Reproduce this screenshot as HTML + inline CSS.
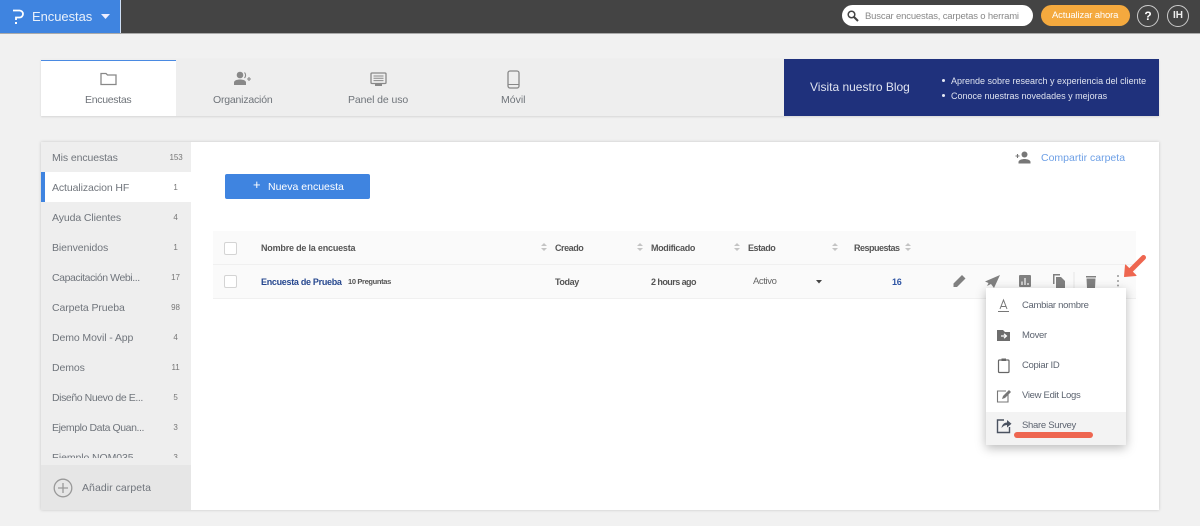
<!DOCTYPE html>
<html lang="es"><head><meta charset="utf-8"><title>Encuestas</title>
<style>
html,body{margin:0;padding:0;width:1200px;height:526px;overflow:hidden;background:#f1f1f1}
body{position:relative;font-family:"Liberation Sans",sans-serif;color:#666}
div,span,svg{position:absolute}
.t{white-space:nowrap;line-height:16px;font-size:11px;color:#6b7078}
.s{font-size:10.5px;color:#70757c;left:52px;letter-spacing:-.1px}
.c{letter-spacing:-.42px}
.n{font-size:8px;color:#777;width:12px;text-align:center;left:169.500px;letter-spacing:-.1px}
.m{left:1022px;font-size:9.500px;color:#5d6470;letter-spacing:-.3px}
.h{font-size:9px;font-weight:bold;color:#555;letter-spacing:-.45px}
.o{font-size:10.500px;color:#6f747a;letter-spacing:-.2px}
</style></head><body>
<!-- Top bar -->
<div style="left:0;top:0;width:1200px;height:33px;background:#444;border-bottom:1px solid #aaa"></div>
<div style="left:0;top:0;width:120px;height:33px;background:#3f84e0;border-right:1px solid #cfdff5"></div>
<svg style="left:11px;top:8px" width="14" height="17" viewBox="0 0 14 17"><path d="M2 2.500H8.500A3.500 3.500 0 0 1 8.500 9.500H5V12" fill="none" stroke="#fff" stroke-width="1.800"/><rect x="4" y="14" width="2" height="2" fill="#fff"/></svg>
<span class="t" style="left:32px;top:9px;font-size:13px;color:#e8f0fb;letter-spacing:-.05px">Encuestas</span>
<svg style="left:101px;top:14px" width="9" height="6"><path d="M0 0H9L4.500 5Z" fill="#eef"/></svg>

<div style="left:842px;top:5px;width:191px;height:21px;background:#fff;border-radius:11px"></div>
<svg style="left:847px;top:10px" width="12" height="12" viewBox="0 0 12 12"><circle cx="4.500" cy="4.500" r="3.300" fill="none" stroke="#444" stroke-width="1.500"/><path d="M7 7L11 11" stroke="#444" stroke-width="2"/></svg>
<span class="t" style="left:865px;top:9px;font-size:9.500px;color:#888;letter-spacing:-.17px">Buscar encuestas, carpetas o herrami</span>
<div style="left:1041px;top:5px;width:89px;height:21px;background:#f4a93e;border-radius:11px"></div>
<span class="t" style="left:1052px;top:8px;font-size:9.500px;color:#fff;letter-spacing:-.15px">Actualizar ahora</span>
<div style="left:1137px;top:5px;width:20px;height:20px;border:1px solid #ccc;border-radius:50%"></div>
<span class="t" style="left:1137px;top:8px;width:22px;text-align:center;font-size:12px;font-weight:bold;color:#fff">?</span>
<div style="left:1167px;top:5px;width:20px;height:20px;border:1px solid #ccc;border-radius:50%"></div>
<span class="t" style="left:1167px;top:8px;width:22px;text-align:center;font-size:10px;font-weight:bold;color:#eee">IH</span>

<!-- Tabs -->
<div style="left:41px;top:59px;width:1118px;height:57px;background:#eee;box-shadow:0 1px 2px rgba(0,0,0,.12)"></div>
<div style="left:41px;top:60px;width:135px;height:56px;background:#fff;border-top:1px solid #4a8ae2;box-sizing:border-box"></div>
<svg style="left:100px;top:72px" width="17" height="14" viewBox="0 0 17 14"><path d="M1 12.500V1.500H6L7.500 3H16V12.500Z" fill="none" stroke="#888" stroke-width="1.300"/></svg>
<span class="t o" style="left:85px;top:92px;letter-spacing:-.3px">Encuestas</span>
<svg style="left:233px;top:71px" width="20" height="15" viewBox="0 0 20 15"><circle cx="7" cy="4" r="3.300" fill="#888"/><path d="M1 14V11.500C1 9.500 4 8.500 7 8.500S13 9.500 13 11.500V14Z" fill="#888"/><path d="M11.500 1.500A4 4 0 0 1 11.500 7M16 6V10M14 8H18" fill="none" stroke="#888" stroke-width="1.100"/></svg>
<span class="t o" style="left:213px;top:92px">Organización</span>
<svg style="left:370px;top:72px" width="17" height="15" viewBox="0 0 17 15"><rect x="1" y="1" width="15" height="10.500" rx="1" fill="none" stroke="#888" stroke-width="1.300"/><path d="M3.500 4H13.500M3.500 6.300H13.500M3.500 8.600H13.500" stroke="#888"/><rect x="5" y="12" width="7" height="2" fill="#888"/></svg>
<span class="t o" style="left:348px;top:92px;letter-spacing:-.1px">Panel de uso</span>
<svg style="left:507px;top:70px" width="13" height="19" viewBox="0 0 13 19"><rect x="1" y="1" width="11" height="17" rx="2" fill="none" stroke="#888" stroke-width="1.300"/><path d="M1 14.500H12" stroke="#888"/></svg>
<span class="t o" style="left:501px;top:92px;letter-spacing:0">Móvil</span>

<div style="left:784px;top:59px;width:375px;height:57px;background:#1f317c"></div>
<span class="t" style="left:810px;top:79px;font-size:12px;color:#dfe3f0">Visita nuestro Blog</span>
<div style="left:942px;top:79px;width:3px;height:3px;border-radius:50%;background:#e6e9f4"></div>
<div style="left:942px;top:94px;width:3px;height:3px;border-radius:50%;background:#e6e9f4"></div>
<span class="t" style="left:951px;top:73px;font-size:9px;color:#dfe3f0">Aprende sobre research y experiencia del cliente</span>
<span class="t" style="left:951px;top:88px;font-size:9px;color:#dfe3f0">Conoce nuestras novedades y mejoras</span>

<!-- Main card -->
<div style="left:41px;top:142px;width:1118px;height:368px;background:#fff;box-shadow:0 0 3px rgba(0,0,0,.18)"></div>
<div style="left:41px;top:142px;width:150px;height:368px;background:#eee;overflow:hidden"></div>
<div style="left:41px;top:172px;width:150px;height:30px;background:#fff"></div>
<div style="left:41px;top:172px;width:4px;height:30px;background:#3f84e0"></div>
<span class="t s" style="top:150px">Mis encuestas</span><span class="t n" style="top:150px">153</span>
<span class="t s" style="top:180px">Actualizacion HF</span><span class="t n" style="top:180px">1</span>
<span class="t s" style="top:210px">Ayuda Clientes</span><span class="t n" style="top:210px">4</span>
<span class="t s" style="top:240px">Bienvenidos</span><span class="t n" style="top:240px">1</span>
<span class="t s c" style="top:270px">Capacitación Webi...</span><span class="t n" style="top:270px">17</span>
<span class="t s" style="top:300px">Carpeta Prueba</span><span class="t n" style="top:300px">98</span>
<span class="t s" style="top:330px">Demo Movil - App</span><span class="t n" style="top:330px">4</span>
<span class="t s" style="top:360px">Demos</span><span class="t n" style="top:360px">11</span>
<span class="t s c" style="top:390px">Diseño Nuevo de E...</span><span class="t n" style="top:390px">5</span>
<span class="t s c" style="top:420px">Ejemplo Data Quan...</span><span class="t n" style="top:420px">3</span>
<span class="t s" style="top:450px">Ejemplo NOM035</span><span class="t n" style="top:450px">3</span>
<div style="left:41px;top:458px;width:150px;height:7px;background:#eee"></div>
<div style="left:41px;top:465px;width:150px;height:45px;background:#e6e6e6"></div>
<svg style="left:53px;top:478px" width="20" height="20" viewBox="0 0 20 20"><circle cx="10" cy="10" r="8.800" fill="none" stroke="#999" stroke-width="1.300"/><path d="M10 5V15M5 10H15" stroke="#999" stroke-width="1.300"/></svg>
<span class="t" style="left:82px;top:480px;font-size:10.500px;color:#70757c;letter-spacing:.05px">Añadir carpeta</span>

<!-- Share -->
<svg style="left:1015px;top:151px" width="16" height="13" viewBox="0 0 16 13"><circle cx="9.500" cy="3.500" r="3" fill="#777"/><path d="M3.500 12.500V11C3.500 9 7 8 9.500 8S15.500 9 15.500 11V12.500Z" fill="#777"/><path d="M2.500 3V7M.5 5H4.500" stroke="#777" stroke-width="1.100"/></svg>
<span class="t" style="left:1041px;top:150px;font-size:10.500px;color:#6ea0e6">Compartir carpeta</span>

<!-- Button -->
<div style="left:225px;top:174px;width:145px;height:25px;background:#3f84e0;border-radius:2px"></div>
<span class="t" style="left:253px;top:177px;font-size:13px;color:#fff">+</span>
<span class="t" style="left:268px;top:179px;font-size:10.500px;color:#fff">Nueva encuesta</span>

<!-- Table -->
<div style="left:213px;top:231px;width:923px;height:34px;background:#fafafa;border-bottom:1px solid #f0f0f0;box-sizing:border-box"></div>
<div style="left:213px;top:265px;width:923px;height:34px;background:#fafafa;border-bottom:1px solid #f0f0f0;box-sizing:border-box"></div>
<div style="left:224px;top:242px;width:11px;height:11px;border:1px solid #d4d4d4;border-radius:2px;background:#fff"></div>
<div style="left:224px;top:275px;width:11px;height:11px;border:1px solid #d4d4d4;border-radius:2px;background:#fff"></div>
<span class="t h" style="left:261px;top:240px;letter-spacing:-.2px">Nombre de la encuesta</span>
<span class="t h" style="left:555px;top:240px">Creado</span>
<span class="t h" style="left:651px;top:240px;letter-spacing:-.35px">Modificado</span>
<span class="t h" style="left:748px;top:240px">Estado</span>
<span class="t h" style="left:854px;top:240px;letter-spacing:-.5px">Respuestas</span>
<svg style="left:0;top:0" width="1200" height="526">
<g fill="#c4c4c4"><path d="M541 246L544 243L547 246ZM541 248H547L544 251Z"/><path d="M637 246L640 243L643 246ZM637 248H643L640 251Z"/><path d="M734 246L737 243L740 246ZM734 248H740L737 251Z"/><path d="M832 246L835 243L838 246ZM832 248H838L835 251Z"/><path d="M905 246L908 243L911 246ZM905 248H911L908 251Z"/></g>
</svg>
<span class="t" style="left:261px;top:274px;font-size:9px;font-weight:bold;color:#27488f;letter-spacing:-.3px">Encuesta de Prueba</span>
<span class="t" style="left:348px;top:274px;font-size:7.500px;color:#555;font-weight:bold;letter-spacing:-.35px">10 Preguntas</span>
<span class="t h" style="left:555px;top:274px;letter-spacing:-.4px">Today</span>
<span class="t h" style="left:651px;top:274px;letter-spacing:-.55px">2 hours ago</span>
<span class="t" style="left:753px;top:274px;font-size:9.500px;color:#666;letter-spacing:-.4px">Activo</span>
<svg style="left:816px;top:280px" width="6" height="4"><path d="M0 0H6L3 3.500Z" fill="#444"/></svg>
<span class="t" style="left:892px;top:274px;font-size:9px;font-weight:bold;color:#2f55a4;letter-spacing:-.3px">16</span>

<!-- Action icons -->
<svg style="left:0;top:0" width="1200" height="526">
<path d="M953.500 287V283.500L962 275L965.500 278.500L957 287Z" fill="#808080"/>
<path d="M985 281.500L1000 275L994 288L991 284L987 286L988.500 283Z" fill="#808080"/>
<rect x="1019" y="275" width="12" height="12" rx="1" fill="#808080"/><path d="M1022 281.500V285M1025 278V285M1028 283V285" stroke="#fafafa" stroke-width="1.200"/>
<path d="M1053 274H1060V275.500H1054.500V284H1053Z" fill="#808080"/><path d="M1056 277H1061L1065 281V288H1056Z" fill="#808080"/>
<path d="M1074 272V290" stroke="#e6e6e6"/>
<path d="M1086.500 278.500H1095.500L1095 288H1087Z" fill="#808080"/><path d="M1086 276H1096V277.500H1086Z" fill="#808080"/>
<g fill="#999"><circle cx="1118" cy="276" r="1"/><circle cx="1118" cy="281" r="1"/><circle cx="1118" cy="285.500" r="1"/></g>
<path d="M1143.500 257.500L1131 270" stroke="#ee6650" stroke-width="5" stroke-linecap="round"/>
<path d="M1124.500 276.500L1125.500 265L1136 275.500Z" fill="#ee6650" stroke="#ee6650" stroke-linejoin="round"/>
</svg>

<!-- Menu -->
<div style="left:986px;top:288px;width:140px;height:157px;background:#fff;box-shadow:0 3px 10px rgba(0,0,0,.28)"></div>
<div style="left:986px;top:412px;width:140px;height:33px;background:#f3f3f3"></div>
<span class="t m" style="top:298px">Cambiar nombre</span>
<span class="t m" style="top:328px">Mover</span>
<span class="t m" style="top:358px">Copiar ID</span>
<span class="t m" style="top:388px">View Edit Logs</span>
<span class="t m" style="top:418px">Share Survey</span>
<svg style="left:0;top:0" width="1200" height="526">
<path d="M1000 309L1003.500 300L1007 309M1001 306.500H1006" fill="none" stroke="#777" stroke-width="1"/><path d="M998 311.500H1009" stroke="#777"/>
<path d="M997 330H1003L1005 332H1010V341H997Z" fill="#6d6d6d"/><path d="M1001 336H1006M1004 333.800L1006.500 336L1004 338.200" fill="none" stroke="#fff" stroke-width="1.200"/>
<rect x="998.500" y="360" width="10.500" height="12.500" rx="1" fill="none" stroke="#666" stroke-width="1.200"/><rect x="1001.500" y="358.500" width="4.500" height="2.500" fill="#666"/>
<path d="M1006 391H997.500V402H1008V394" fill="none" stroke="#777" stroke-width="1.100"/><path d="M1002 399L1003 396L1009 390L1011 392L1005 398Z" fill="#777"/>
<path d="M1004 420H997.500V432.500H1009.500V427" fill="none" stroke="#4a5260" stroke-width="1.400"/><path d="M1001.500 428C1002 424 1005 422.500 1007 422.500V420L1011.500 423.800L1007 427.500V425C1005 425 1003 426 1001.500 428Z" fill="#4a5260"/>
<rect x="1014" y="432" width="79" height="6" rx="3" fill="#ee6650"/>
</svg>
</body></html>
